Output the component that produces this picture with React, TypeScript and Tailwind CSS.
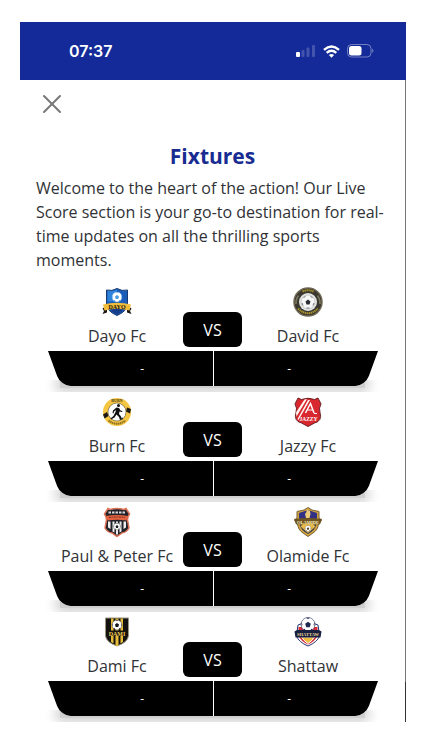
import type { ReactNode } from "react";
import { X } from "lucide-react";

interface Team {
  name: string;
  crest: ReactNode;
  score: string;
}

interface Fixture {
  home: Team;
  away: Team;
}

function Crest({ label, children }: { label: string; children: ReactNode }) {
  return (
    <svg viewBox="0 0 60 60" role="img" aria-label={label} className="size-[30px] font-['Liberation_Serif',serif] font-bold">
      {children}
    </svg>
  );
}

function Ball({ cx, cy, r, dark = "#15161c" }: { cx: number; cy: number; r: number; dark?: string }) {
  return (
    <g transform={`translate(${cx} ${cy}) scale(${r / 10})`}>
      <circle r="10" fill="#fff" stroke={dark} strokeWidth=".8" />
      <path d="M0-4 4-1 2.500 4h-5L-4-1Z" fill={dark} />
      <path d="M-3-9.500 0-8l3-1.500ZM9.500-4 8 0l1 3ZM-9.500-4-8 0l-1 3ZM-7 7l2.500-1 1 3ZM7 7 4.500 6l-1 3Z" fill={dark} />
    </g>
  );
}

const dayoCrest = (
  <Crest label="Dayo Fc crest">
    <path d="M9 6q11 3 21-3 10 6 21 3v28q0 14-21 23Q9 48 9 34Z" fill="#1b5cb8" stroke="#16396f" strokeWidth="2" />
    <path d="M11 8q10 2 19-3v24H11Z" fill="#2f83da" />
    <path d="M12 40q8 11 18 15 10-4 18-15Z" fill="#153d8c" />
    <Ball cx={30} cy={20} r={10} dark="#4e9be6" />
    <path d="m1 43 9-6v14l-9 3 3-6ZM59 43l-9-6v14l9 3-3-6Z" fill="#191713" />
    <path d="M2 35q28-7 56 0l-3 12q-25-7-50 0Z" fill="#f2bd3b" />
    <text x="30" y="43" textAnchor="middle" fontSize="12" fill="#17130b">DAYO</text>
  </Crest>
);

const davidCrest = (
  <Crest label="David Fc crest">
    <circle cx="30" cy="30" r="28" fill="#3c3b36" stroke="#716a57" strokeWidth="3" />
    <circle cx="30" cy="30" r="23" fill="none" stroke="#3a382f" strokeWidth="7" />
    <path d="M19 9q11-5 22 0M10 43q20 19 40 0" fill="none" stroke="#a9912d" strokeWidth="4" strokeDasharray="3 1" />
    <path d="M6 34q-1-9 5-17M54 34q1-9-5-17" fill="none" stroke="#7b795f" strokeWidth="3" />
    <circle cx="30" cy="30" r="18" fill="#e6e6e3" />
    <circle cx="30" cy="30" r="14" fill="#f7f7f7" stroke="#a5a5a7" strokeWidth="1" />
    <path d="m30 25 5 4-2 6h-6l-2-6Z" fill="#2b2c31" />
    <path d="m21 21 4-2M35 19l4 2M18 32l2 5M42 32l-2 5M27 42h6" stroke="#77787c" strokeWidth="2" />
  </Crest>
);

const burnCrest = (
  <Crest label="Burn Fc crest">
    <circle cx="30" cy="30" r="28" fill="#f5c642" />
    <path d="m2 35 8-5 3 8-8 5ZM58 24l-8-3-2 8 8 4Z" fill="#1a1916" />
    <circle cx="30" cy="30" r="18" fill="#fff" stroke="#37322a" strokeWidth="1" />
    <text x="30" y="10" textAnchor="middle" fontSize="8" fill="#3f3212">BURN</text>
    <path d="M13 47q17 13 34 0" fill="none" stroke="#8b7024" strokeWidth="4" strokeDasharray="3 1" />
    <circle cx="33" cy="17" r="3" fill="#111" />
    <path d="m29 21 5 1 3 5 4 1-1 2-5-1-1 5 4 5 1 6-3 1-2-6-5-5-4 6-7 4-1-2 6-5 4-8 1-4-4 3-1 4-2-1 1-5Z" fill="#111" />
    <circle cx="40" cy="43" r="2" fill="#222" />
  </Crest>
);

const jazzyCrest = (
  <Crest label="Jazzy Fc crest">
    <path d="m10 2 7 3q13-5 26 0l7-3 6 12q-5 8-2 17 5 17-11 21L30 59l-13-7Q1 48 6 31q3-9-2-17Z" fill="#d9272f" stroke="#692126" strokeWidth="2" />
    <path d="m6 31 17-26 5-1L7 39ZM9 44 30 6l4 0-23 40Z" fill="#fff4ef" />
    <path d="m25 32 10-19 7 19" fill="none" stroke="#fff" strokeWidth="3" />
    <path d="M29 26h10M42 33h6" stroke="#fff" strokeWidth="2" />
    <text x="31" y="47" textAnchor="middle" fontSize="11" fill="#fff">JAZZY</text>
  </Crest>
);

const paulPeterCrest = (
  <Crest label="Paul and Peter Fc crest">
    <path d="m12 3 4 2q14-4 28 0l4-2 7 11q-6 8-3 17l2 11q-5 9-14 10L30 59l-10-7Q11 51 6 42l2-11q3-9-3-17Z" fill="#22232a" stroke="#db7359" strokeWidth="3" />
    <path d="M12 29h5v15l-5-3ZM21 29h4v22l-4-2ZM28 29h4v26h-4ZM35 29h4v20l-4 2ZM43 29h5v12l-5 3Z" fill="#eee" />
    <path d="M13 11h34" stroke="#d9d8d8" strokeWidth="4" strokeDasharray="5 2" />
    <path d="M8 18q22-4 44 0l-3 9q-19-3-38 0Z" fill="#e4623f" />
    <path d="M14 21q16-2 32 0" fill="none" stroke="#7d3526" strokeWidth="2" strokeDasharray="4 1" />
    <Ball cx={30} cy={39} r={7} />
  </Crest>
);

const olamideCrest = (
  <Crest label="Olamide Fc crest">
    <path d="m30 1 8 5 14 3v13l5 4-6 7q-1 13-11 19l-10 7-10-7Q10 46 9 33l-6-7 5-4V9l14-3Z" fill="#d4a640" stroke="#776034" strokeWidth="2" />
    <path d="m12 12 18-6 18 6v13H12Z" fill="#303184" />
    <path d="m27 5 7 3 1 6-2 8h-7l-2-8 3-4Z" fill="#eecb77" />
    <path d="M13 35h34q-3 12-17 19Q16 47 13 35Z" fill="#3b3c4c" />
    <path d="m20 34-5 5 15 13 15-13-5-5Z" fill="#e5ba49" />
    <path d="M2 24q28-4 56 0l-4 11q-24-4-48 0Z" fill="#6e5420" />
    <text x="30" y="33" textAnchor="middle" fontSize="9" fill="#fff2c2">OLAMIDE</text>
    <Ball cx={30} cy={43} r={6} dark="#54472b" />
  </Crest>
);

const damiCrest = (
  <Crest label="Dami Fc crest">
    <path d="M7 2h46v36q-2 13-23 20Q9 51 7 38Z" fill="#15130f" stroke="#999583" strokeWidth="2" />
    <path d="M18 3h5v50l-5-3ZM27 3h6v54l-3 1-3-1ZM37 3h5v47l-5 3Z" fill="#e8bd3a" />
    <Ball cx={30} cy={16} r={10} />
    <path d="M9 27h42v11H9Z" fill="#19150d" />
    <text x="30" y="37" textAnchor="middle" fontSize="12" fill="#f0cb58">DAMI</text>
  </Crest>
);

const shattawCrest = (
  <Crest label="Shattaw crest">
    <path d="M10 16q20-10 40 0l3 22q-4 12-23 20Q11 50 7 38Z" fill="#fff" stroke="#24366f" strokeWidth="2" />
    <path d="M11 20h38v17q-4 11-19 18Q15 48 11 37Z" fill="#d92b39" />
    <path d="M17 40h26q-4 7-13 13-9-6-13-13Z" fill="#edbd42" stroke="#fff" strokeWidth="2" />
    <Ball cx={30} cy={15} r={14} dark="#202b53" />
    <path d="m3 29 5-3h44l5 3-2 12H5Z" fill="#17213f" />
    <text x="30" y="37" textAnchor="middle" fontSize="9" fill="#f0d699">SHATTAW</text>
  </Crest>
);

const FIXTURES: Fixture[] = [
  {
    home: { name: "Dayo Fc", crest: dayoCrest, score: "-" },
    away: { name: "David Fc", crest: davidCrest, score: "-" },
  },
  {
    home: { name: "Burn Fc", crest: burnCrest, score: "-" },
    away: { name: "Jazzy Fc", crest: jazzyCrest, score: "-" },
  },
  {
    home: { name: "Paul & Peter Fc", crest: paulPeterCrest, score: "-" },
    away: { name: "Olamide Fc", crest: olamideCrest, score: "-" },
  },
  {
    home: { name: "Dami Fc", crest: damiCrest, score: "-" },
    away: { name: "Shattaw", crest: shattawCrest, score: "-" },
  },
];

function StatusBar() {
  return (
    <header className="flex h-[58px] items-center justify-between bg-[#132a98] pr-8 pl-[49px] text-white">
      <span className="font-[Inter,sans-serif] text-base font-semibold">07:37</span>
      <div className="flex items-center gap-[7px]">
        {/* Signal */}
        <svg viewBox="0 0 20 14" className="h-3.5 w-5">
          <rect x="0" y="8" width="4" height="5" rx="1" fill="#fff" />
          <rect x="5.500" y="6" width="3" height="7" rx="1" fill="#fff" opacity=".2" />
          <rect x="10.500" y="3.500" width="3" height="9.500" rx="1" fill="#fff" opacity=".2" />
          <rect x="16" y="1" width="3" height="12" rx="1" fill="#fff" opacity=".2" />
        </svg>
        {/* Wifi */}
        <svg viewBox="0 0 17 13" className="h-[13px] w-[17px]" fill="none" stroke="#fff" strokeWidth="2.400">
          <path d="M1 4.800q7.500-6.600 15 0M3.700 7.900q4.800-4.200 9.600 0" />
          <path d="M8.500 12.800 5.900 10q2.600-2.200 5.200 0Z" fill="#fff" stroke="none" />
        </svg>
        {/* Battery */}
        <svg viewBox="0 0 27 14" className="h-3.5 w-[27px]">
          <rect x=".5" y=".5" width="23.500" height="12.500" rx="4" fill="none" stroke="#fff" opacity=".4" />
          <rect x="2" y="2" width="12.500" height="9.500" rx="2.500" fill="#fff" />
          <path d="M25.300 4.500q2.200 2.300 0 4.500Z" fill="#fff" opacity=".5" />
        </svg>
      </div>
    </header>
  );
}

function TeamLabel({ team }: { team: Team }) {
  return (
    <div className="flex flex-col items-center gap-[7px] whitespace-nowrap">
      {team.crest}
      <h2 className="text-base/6 text-[#303236]">{team.name}</h2>
    </div>
  );
}

function FixtureCard({ home, away }: Fixture) {
  return (
    <li className="relative pt-[5px] pb-1.5">
      {/* Shadow strip under the score bar */}
      <div className="absolute inset-x-0 bottom-0 h-3 overflow-hidden">
        <div className="mx-6 h-2 bg-[#cfcfcf] shadow-[0_0_12px_4px_#cfcfcf]" />
      </div>

      <div className="grid grid-cols-[1fr_59px_1fr] px-[15px]">
        <TeamLabel team={home} />
        <span className="mt-[25px] flex h-[35px] items-center justify-center rounded-md bg-black text-base font-medium text-white">
          VS
        </span>
        <TeamLabel team={away} />
      </div>

      <div className="relative mx-3 mt-[3px] grid h-[35px] grid-cols-2 text-xs text-white">
        <div className="absolute inset-y-0 right-1/2 left-0 origin-top-left skew-x-[20deg] rounded-bl-[10px] bg-black" />
        <div className="absolute inset-y-0 right-0 left-1/2 origin-top-right -skew-x-[20deg] rounded-br-[10px] bg-black" />
        <span className="relative flex items-center justify-center pl-6">{home.score}</span>
        <span className="relative flex items-center justify-center border-l border-white pr-3">{away.score}</span>
      </div>
    </li>
  );
}

export default function App() {
  return (
    <div className="bg-white pt-[22px] pr-4 pb-7 pl-5 font-['Open_Sans','Noto_Sans',sans-serif]">
      <StatusBar />
      <main className="relative border-r border-[#777] px-4 pt-2">
        <button type="button" aria-label="Close" className="block text-[#777]">
          <X className="size-8 stroke-[1.5]" />
        </button>

        <h1 className="mt-5 text-center text-[21px]/8 font-bold text-[#182c91]">Fixtures</h1>
        <p className="mt-1 text-base/6 text-[#303236]">
          Welcome to the heart of the action! Our Live Score section is your go-to destination for real-time updates on
          all the thrilling sports moments.
        </p>

        <ul className="mt-2.5">
          {FIXTURES.map((fixture) => (
            <FixtureCard key={fixture.home.name} {...fixture} />
          ))}
        </ul>

        {/* Scroll thumb */}
        <div className="absolute -right-px bottom-0 h-10 w-px bg-[#333]" />
      </main>
    </div>
  );
}
